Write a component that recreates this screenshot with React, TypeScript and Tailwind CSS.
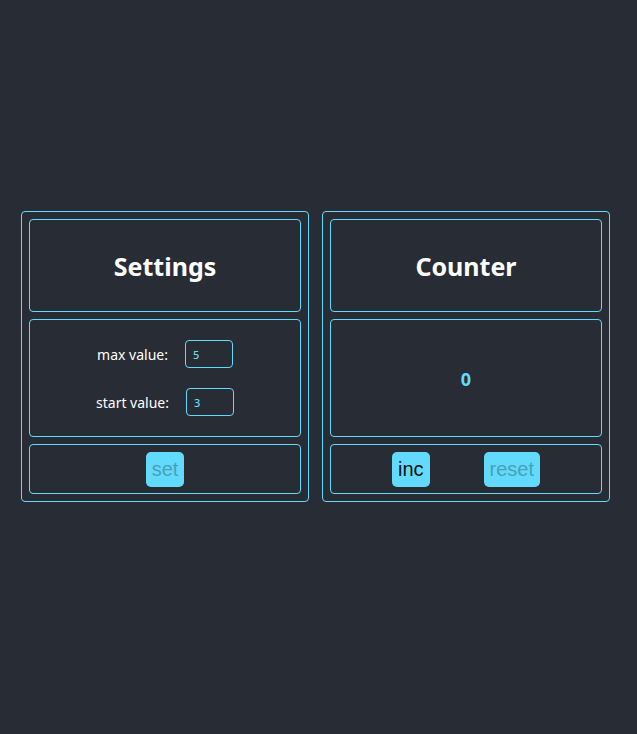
import { useState } from "react";

const font = { fontFamily: '"Noto Sans", "Open Sans", sans-serif' };

function Panel({ children }: { children: React.ReactNode }) {
  return (
    <div className="w-[288px] flex flex-col gap-[7px] p-[7px] border border-[#61dafb] rounded-[4px]">
      {children}
    </div>
  );
}

function Box({ className = "", children }: { className?: string; children: React.ReactNode }) {
  return <div className={`border border-[#61dafb] rounded-[4px] flex ${className}`}>{children}</div>;
}

function Btn({ label, disabled }: { label: string; disabled?: boolean }) {
  return (
    <button
      disabled={disabled}
      className={`h-[35px] px-[6px] rounded-[5px] bg-[#61dafb] text-[20px] leading-none font-['Liberation_Sans',Arial,sans-serif] ${
        disabled ? "text-[#4a9fba]" : "text-[#111]"
      }`}
    >
      {label}
    </button>
  );
}

export default function App() {
  const [max] = useState("5");
  const [start] = useState("3");
  const count = 0;

  return (
    <div className="min-h-screen bg-[#282c34] pl-[21px] pt-[211px] flex gap-[13px] items-start" style={font}>
      {/* settings */}
      <Panel>
        <Box className="h-[93px] items-center justify-center">
          <h2 className="text-white text-[25px] font-bold pt-[3px]">Settings</h2>
        </Box>
        <Box className="h-[118px] flex-col items-center justify-center gap-5">
          <label className="flex items-center gap-[17px] text-white text-[14px]">
            max value:
            <input
              value={max}
              readOnly
              className="w-[48px] h-[28px] pl-[7px] border border-[#61dafb] rounded-[4px] bg-transparent text-[#61dafb] text-[11px] font-medium outline-none"
            />
          </label>
          <label className="flex items-center gap-[17px] text-white text-[14px]">
            start value:
            <input
              value={start}
              readOnly
              className="w-[48px] h-[28px] pl-[7px] border border-[#61dafb] rounded-[4px] bg-transparent text-[#61dafb] text-[11px] font-medium outline-none"
            />
          </label>
        </Box>
        <Box className="h-[50px] items-center justify-center">
          <Btn label="set" disabled />
        </Box>
      </Panel>

      {/* counter */}
      <Panel>
        <Box className="h-[93px] items-center justify-center">
          <h2 className="text-white text-[25px] font-bold pt-[3px]">Counter</h2>
        </Box>
        <Box className="h-[118px] items-center justify-center">
          <span className="text-[#61dafb] text-[18px] font-bold pt-[3px]">{count}</span>
        </Box>
        <Box className="h-[50px] items-center justify-center gap-[54px]">
          <Btn label="inc" />
          <Btn label="reset" disabled />
        </Box>
      </Panel>
    </div>
  );
}
